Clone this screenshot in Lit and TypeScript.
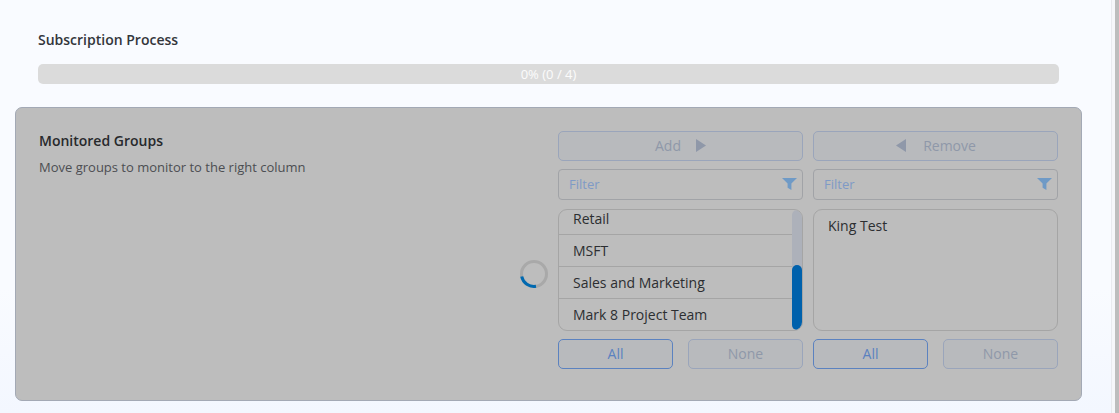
import { LitElement, html, css } from "lit";
import { customElement } from "lit/decorators.js";

const FUNNEL = html`<svg class="funnel" viewBox="0 0 15 12" width="15" height="12"><path d="M0 0H15L9.4 5.6V12L5.6 9.8V5.6Z"/></svg>`;

@customElement("app-root")
export class AppRoot extends LitElement {
  static styles = css`
    :host { display: block; width: 1119px; height: 413px; overflow: hidden; font-family: "Open Sans", sans-serif; }
    * { box-sizing: border-box; }
    .page { display: flex; height: 413px; background: #f9fbff; }
    .main { width: 1111px; height: 413px; padding: 31px 29px 0 15px; background: linear-gradient(#f9fbff 70%, #f3f7ff); }
    .edge { width: 4px; background: #f6f7fa; border-left: 1px solid #e9ebef; }
    .rail { width: 4px; background: #bdbdbd; }
    .title { margin: 0 0 15px 23px; font-size: 14px; line-height: 18px; font-weight: 600; color: #33363b; }
    .progress { margin: 0 23px 23px 23px; height: 20px; border-radius: 5px; background: #dbdbdb; color: #fbfbfb; font-size: 13px; line-height: 20px; text-align: center; }
    .card { position: relative; display: flex; justify-content: space-between; height: 294px; padding: 23px 23px 0 23px; background: #bdbdbd; border: 1px solid #a3a9b5; border-radius: 7px; }
    .card h2 { margin: 0 0 7px; font-size: 14px; line-height: 20px; font-weight: 600; color: #27292c; }
    .card p { margin: 0; font-size: 13px; line-height: 18px; color: #4c4e52; }
    .transfer { display: grid; grid-template-columns: 245px 245px; column-gap: 10px; width: 500px; }
    .col { display: flex; flex-direction: column; }
    .btn { display: flex; align-items: center; justify-content: center; height: 30px; padding-bottom: 1px; border: 1px solid #9aa5bb; border-radius: 5px; background: #b8babd; color: #8f98a9; font-size: 14px; }
    .btn svg { fill: #8f98a9; display: block; }
    .add svg { margin-left: 15px; }
    .remove { padding-left: 1px; }
    .remove svg { margin-right: 17px; }
    .filter { display: flex; align-items: center; justify-content: space-between; height: 31px; margin-top: 8px; padding: 0 5px 2px 10px; border: 1px solid #a1a3a7; border-radius: 4px; font-size: 13px; color: #7f9ac6; }
    .funnel { fill: #6f9ac6; display: block; margin-top: 1px; }
    .list { position: relative; height: 122px; margin-top: 9px; border: 1px solid #a5a5a5; border-radius: 9px; overflow: hidden; font-size: 14px; color: #2c2e31; }
    .row { height: 32px; padding-left: 14px; line-height: 32px; border-bottom: 1px solid #a5a5a5; }
    .row:first-child { margin-top: -7px; }
    .row:last-of-type { border-bottom: 0; }
    .single { padding: 6px 14px; line-height: 20px; }
    .track { position: absolute; top: 0; right: 0; width: 10px; height: 120px; background: #adb1ba; border-radius: 5px; }
    .thumb { position: absolute; left: 0; bottom: 0; width: 10px; height: 65px; background: #0061ac; border-radius: 5px; }
    .pair { display: flex; justify-content: space-between; margin-top: 8px; }
    .pair .btn { width: 115px; }
    .pair .on { border-color: #5b82c0; color: #5b82c0; }
    .spinner { position: absolute; left: 503px; top: 151px; display: block; }
  `;

  render() {
    return html`
      <div class="page">
        <div class="main">
          <div class="title">Subscription Process</div>
          <div class="progress">0% (0 / 4)</div>
          <section class="card">
            <div>
              <h2>Monitored Groups</h2>
              <p>Move groups to monitor to the right column</p>
            </div>
            <div class="transfer">
              <div class="col">
                <div class="btn add">Add<svg viewBox="0 0 10 13" width="10" height="13"><path d="M0 0L10 6.5L0 13Z"/></svg></div>
                <div class="filter">Filter${FUNNEL}</div>
                <div class="list">
                  <div class="row">Retail</div>
                  <div class="row">MSFT</div>
                  <div class="row">Sales and Marketing</div>
                  <div class="row">Mark 8 Project Team</div>
                  <div class="track"><div class="thumb"></div></div>
                </div>
                <div class="pair"><div class="btn on">All</div><div class="btn">None</div></div>
              </div>
              <div class="col">
                <div class="btn remove"><svg viewBox="0 0 10 13" width="10" height="13"><path d="M10 0L0 6.5L10 13Z"/></svg>Remove</div>
                <div class="filter">Filter${FUNNEL}</div>
                <div class="list single">King Test</div>
                <div class="pair"><div class="btn on">All</div><div class="btn">None</div></div>
              </div>
            </div>
            <svg class="spinner" width="30" height="30" viewBox="0 0 30 30" fill="none" stroke-width="3">
              <circle cx="15" cy="15" r="12.5" stroke="#a9a9a9"/>
              <path d="M2.7 17.5A12.5 12.5 0 0 0 17 27.3" stroke="#0069b0"/>
            </svg>
          </section>
        </div>
        <div class="edge"></div>
        <div class="rail"></div>
      </div>
    `;
  }
}
